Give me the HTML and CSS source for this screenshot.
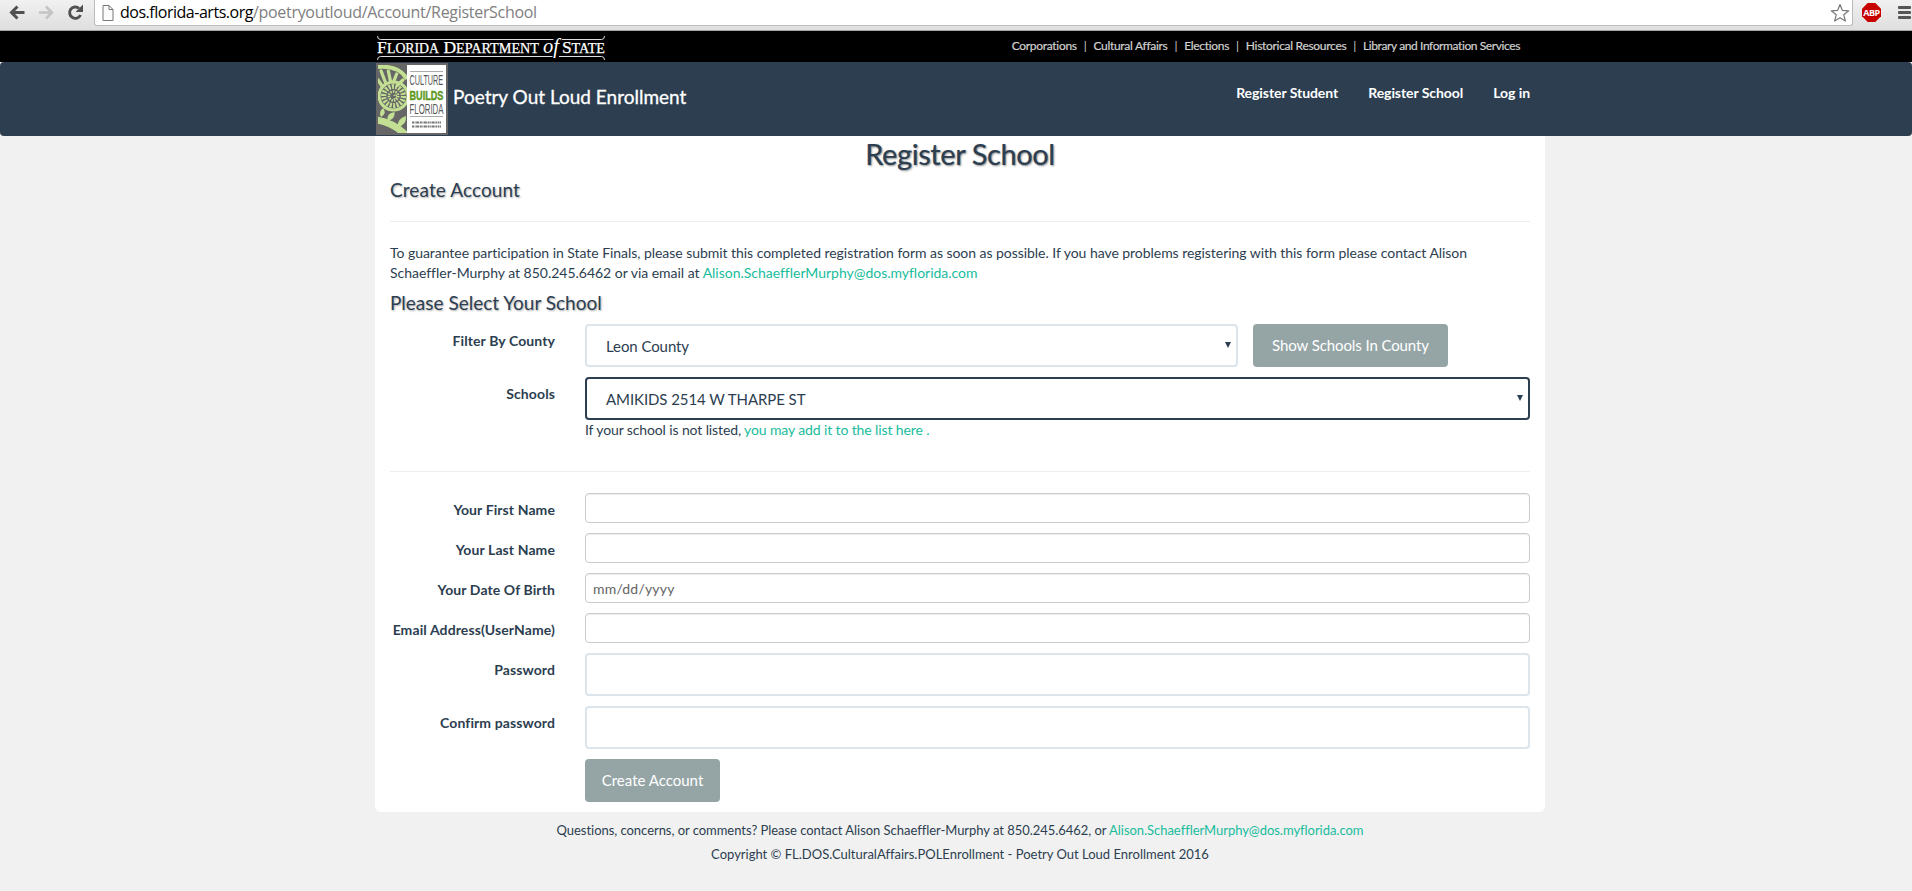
FILE: index.html
```
<!DOCTYPE html>
<html lang="en">
<head>
<meta charset="utf-8">
<title>Register School - Poetry Out Loud Enrollment</title>
<link rel="stylesheet" href="styles.css">
</head>
<body>
<div class="chrome">
  <svg class="tools" width="94" height="30" viewBox="0 0 94 30">
    <path d="M24.500 12.500H12M17.500 6.500L11.500 12.500l6 6" fill="none" stroke="#505050" stroke-width="3"/>
    <path d="M39 12.500H51.500M46 6.500l6 6-6 6" fill="none" stroke="#c4c4c4" stroke-width="2.600"/>
    <path d="M80.500 15A5.700 5.700 0 1 1 79 8.300" fill="none" stroke="#505050" stroke-width="2.900"/>
    <path d="M83 4.500v7.500h-7.500z" fill="#505050"/>
  </svg>
  <div class="address">
    <svg class="page-icon" width="12" height="16" viewBox="0 0 12 16"><path d="M1 .5h6l4 4v11H1zM7 .5v4h4" fill="#fcfcfc" stroke="#777"/></svg>
    <span class="url"><b>dos.florida-arts.org</b>/poetryoutloud/Account/RegisterSchool</span>
    <svg class="star" width="20" height="20" viewBox="0 0 20 20"><path d="M10 1.500l2.400 5.900 6.300.400-4.900 4 1.600 6.300L10 14.700l-5.400 3.400 1.600-6.300-4.900-4 6.300-.4z" fill="#fff" stroke="#777" stroke-width="1.200" stroke-linejoin="round"/></svg>
  </div>
  <div class="abp"><span>ABP</span></div>
  <div class="menu"><i></i><i></i><i></i></div>
</div>
<div class="statebar">
  <div class="inner">
    <svg class="dos" width="230" height="28" viewBox="0 0 230 28">
      <path d="M1.500 1q0 3.500 3 3.500h173M186 4.500h39.500q3 0 3-3.500M1.500 25q0-3.500 3-3.500h172M183 21.500h42.500q3 0 3 3.500" fill="none" stroke="#ddd"/>
      <g fill="#fff" stroke="#fff" stroke-width=".25" font-family="Liberation Serif, serif" font-size="14">
        <text x="1" y="18" font-size="17.500">F</text><text x="11" y="18" textLength="52" lengthAdjust="spacingAndGlyphs">LORIDA</text>
        <text x="67.500" y="18" font-size="17.500">D</text><text x="80" y="18" textLength="83" lengthAdjust="spacingAndGlyphs">EPARTMENT</text>
        <text x="167" y="18" font-size="21" font-style="italic" stroke="none" textLength="16" lengthAdjust="spacingAndGlyphs">of</text>
        <text x="186" y="18" font-size="17.500">S</text><text x="195.500" y="18" textLength="33.500" lengthAdjust="spacingAndGlyphs">TATE</text>
      </g>
    </svg>
    <div class="state-links"><a>Corporations</a><i>|</i><a>Cultural Affairs</a><i>|</i><a>Elections</a><i>|</i><a>Historical Resources</a><i>|</i><a>Library and Information Services</a></div>
  </div>
</div>
<div class="nav-wrap">
  <div class="navbar">
    <div class="inner">
      <svg class="culture" width="74" height="74" viewBox="0 0 74 74">
        <rect x="1" y="1" width="72" height="72" fill="#666"/>
        <svg x="3" y="3" width="29" height="68" viewBox="0 0 28 68" preserveAspectRatio="none">
          <g fill="none" stroke="#c3df93">
            <path d="M0 2Q20 0 28 14" stroke-width="4"/>
            <path d="M3 6l4 11M10 6l2 10M18 9l-3 8M24 15l-5 5M0 15l4 6" stroke-width="3.200" stroke-linecap="round"/>
            <circle cx="15" cy="31" r="14" stroke-width="3"/>
            <circle cx="15" cy="31" r="9.500" stroke-width="5" stroke-dasharray="2 1.300"/>
            <circle cx="15" cy="31" r="4.500" stroke-width="2.500" stroke-dasharray="1.500 1"/>
            <path d="M15 31q2-2 3 0t-3 3" stroke-width="1"/>
            <path d="M-2 55Q14 57 28 71" stroke-width="7"/>
          </g>
          <path d="M3 52q-3-5 2-9 4 5-2 9M9 56q-1-8 7-9 1 7-7 9M19 62q-1-8 8-11 1 9-8 11" fill="#c3df93"/>
        </svg>
        <rect x="32" y="3" width="39" height="68" fill="#fff"/>
        <path d="M35 9.500h33M35 54.500h33" stroke="#aaa"/>
        <g font-family="Liberation Sans, sans-serif" fill="#555" font-size="13">
          <text transform="translate(34.500 23) scale(.555 1.080)">CULTURE</text>
          <text transform="translate(34.500 37.500) scale(.7 1)" font-weight="700" fill="#5f9a1e" stroke="#5f9a1e" stroke-width=".5">BUILDS</text>
          <text transform="translate(34.500 52) scale(.605 1.080)">FLORIDA</text>
        </g>
        <path d="M37 60.500h29M37 64.500h29" stroke="#777" stroke-width="2" stroke-dasharray="2 .6 1 .5 3 .7"/>
      </svg>
      <span class="brand">Poetry Out Loud Enrollment</span>
      <div class="nav-links"><a>Register Student</a><a>Register School</a><a>Log in</a></div>
    </div>
  </div>
</div>
<main class="panel">
  <h1>Register School</h1>
  <h2 class="create">Create Account</h2>
  <hr class="rule">
  <p class="intro"><span>To guarantee participation in State Finals, please submit this completed registration form as soon as possible. If you have problems registering with this form please contact Alison</span><br>Schaeffler-Murphy at 850.245.6462 or via email at <a>Alison.SchaefflerMurphy@dos.myflorida.com</a></p>
  <h2 class="select-title">Please Select Your School</h2>
  <div class="row tall"><label>Filter By County</label><div class="field county"><span>Leon County</span><i class="arrow"></i></div><div class="btn show">Show Schools In County</div></div>
  <div class="row tall"><label>Schools</label><div class="field focused"><span>AMIKIDS 2514 W THARPE ST</span><i class="arrow"></i></div></div>
  <p class="hint">If your school is not listed, <a>you may add it to the list here .</a></p>
  <hr class="rule second">
  <div class="row"><label>Your First Name</label><div class="input"></div></div>
  <div class="row"><label>Your Last Name</label><div class="input"></div></div>
  <div class="row"><label>Your Date Of Birth</label><div class="input">mm/dd/yyyy</div></div>
  <div class="row"><label>Email Address(UserName)</label><div class="input"></div></div>
  <div class="row tall"><label>Password</label><div class="field"></div></div>
  <div class="row tall"><label>Confirm password</label><div class="field"></div></div>
  <div class="row tall last"><label></label><div class="btn submit">Create Account</div></div>
</main>
<footer>
  <p class="q">Questions, concerns, or comments? Please contact Alison Schaeffler-Murphy at 850.245.6462, or <a>Alison.SchaefflerMurphy@dos.myflorida.com</a></p>
  <p class="c">Copyright © FL.DOS.CulturalAffairs.POLEnrollment - Poetry Out Loud Enrollment 2016</p>
</footer>
</body>
</html>
```
FILE: styles.css
```
* { box-sizing: border-box; }
body { margin: 0; height: 891px; overflow: hidden; background: #f1f1f1; font: 14px/20px Lato, sans-serif; font-variant-ligatures: none; color: #2c3e50; }
p, h1, h2 { margin: 0; }
a { color: #18bc9c; text-decoration: none; }
i { font-style: normal; }
svg { flex: none; }
.chrome { height: 31px; display: flex; background: linear-gradient(#f1f1f1, #dedede); border-bottom: 1px solid #a5a5a5; }
.address { width: 1759px; height: 26px; display: flex; align-items: center; background: #fff; border: 1px solid #bbb; border-top: 0; border-radius: 0 0 3px 3px; padding-left: 7px; }
.page-icon { margin-right: 6px; }
.url { font: 16px/24px "Open Sans", sans-serif; letter-spacing: -.3px; color: #808080; white-space: nowrap; margin-top: -1px; }
.url b { font-weight: 400; letter-spacing: -.48px; color: #000; }
.star { margin-left: auto; margin-right: 2px; }
.abp { width: 19px; height: 19px; margin: 3px 0 0 9px; background: #c70000; color: #fff; clip-path: polygon(30% 0, 70% 0, 100% 30%, 100% 70%, 70% 100%, 30% 100%, 0 70%, 0 30%); font: bold 9px/19px "Open Sans", sans-serif; letter-spacing: -.5px; text-align: center; }
.menu { margin: 6px 0 0 17px; width: 13px; display: flex; flex-direction: column; gap: 2px; }
.menu i { height: 3px; background: #555; border-radius: 1px; }
.statebar { height: 31px; background: #000; }
.inner { width: 1170px; margin: 0 auto; position: relative; left: 4px; display: flex; }
.dos { margin: 4px 0 0 1px; }
.culture { overflow: visible; }
.state-links { margin: 5px 25px 0 auto; display: flex; gap: 7px; font-size: 12px; letter-spacing: -.3px; color: #d0d0d0; white-space: nowrap; }
.state-links a { color: #d0d0d0; -webkit-text-stroke: .2px #d0d0d0; }
.state-links a:last-child { letter-spacing: -.4px; }
.nav-wrap { background: #f1f1f1; }
.navbar { height: 74px; background: #2c3e50; border-radius: 4px; }
.brand { margin: 23px 0 0 4px; font-size: 19px; line-height: 24px; color: #fff; white-space: nowrap; -webkit-text-stroke: .3px #fff; }
.nav-links { display: flex; gap: 30px; margin: 21px 15px 0 auto; font-weight: 700; letter-spacing: -.06px; }
.nav-links a { color: #fff; }
.panel { width: 1170px; height: 676px; margin: 0 auto; position: relative; left: 4px; padding: 0 15px; background: #fff; border-radius: 0 0 6px 6px; }
h1 { font-size: 29px; line-height: 36px; letter-spacing: -.4px; font-weight: 400; text-align: center; text-shadow: 1px 1px 2px #888; -webkit-text-stroke: .2px #2c3e50; }
h2 { font-size: 19px; line-height: 24px; font-weight: 400; text-shadow: 1px 1px 2px #aaa; white-space: nowrap; }
.create { margin-top: 6px; letter-spacing: .1px; }
.rule { border: 0; height: 1px; background: #eee; margin: 19px 0 21px; }
.intro { white-space: nowrap; letter-spacing: -.02px; }
.intro span { letter-spacing: -.045px; }
.select-title { margin: 8px 0 9px; }
.row { display: flex; height: 30px; margin-bottom: 10px; }
.row.tall { height: 43px; }
label { width: 165px; margin-right: 30px; padding-top: 7px; text-align: right; font-weight: 700; letter-spacing: .1px; white-space: nowrap; flex: none; }
.input { flex: 1; border: 1px solid #ccc; border-radius: 4px; box-shadow: inset 0 1px 1px rgba(0,0,0,.075); padding: 5px 7px 0; color: #646464; letter-spacing: .2px; }
.field { flex: 1; display: flex; justify-content: space-between; border: 2px solid #dce4ec; border-radius: 4px; padding: 10px 5px 0 19px; font-size: 15px; letter-spacing: -.08px; }
.county { flex: 0 0 653px; }
.focused { border-color: #2c3e50; }
.arrow { width: 6px; height: 6px; margin-top: 6px; background: #2c3e50; clip-path: polygon(0 0, 100% 0, 50% 100%); }
.btn { background: #95a5a6; color: #fff; border-radius: 4px; font-size: 15px; line-height: 43px; text-align: center; white-space: nowrap; }
.show { width: 195px; margin-left: 15px; letter-spacing: -.1px; }
.submit { width: 135px; }
.hint { margin: -10px 0 0 195px; letter-spacing: -.12px; }
.second { margin: 31px 0 21px; }
footer { text-align: center; position: relative; left: 4px; padding-top: 7px; font-size: 13px; }
.q { line-height: 22px; letter-spacing: -.04px; }
.c { line-height: 26px; }
```
